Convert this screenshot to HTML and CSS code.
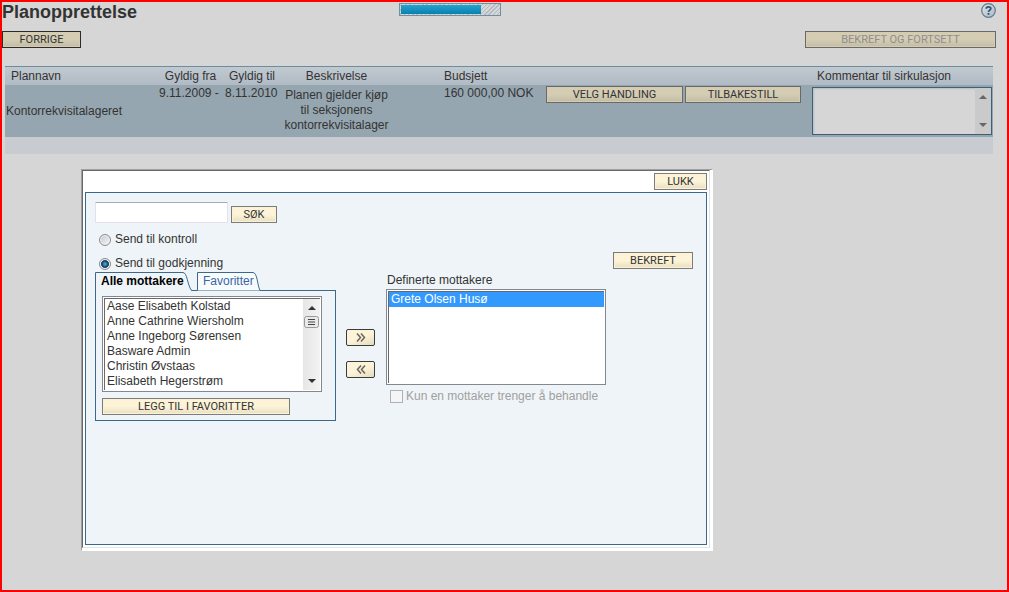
FILE: index.html
```html
<!DOCTYPE html>
<html lang="no">
<head>
<meta charset="utf-8">
<title>Planopprettelse</title>
<link rel="stylesheet" href="styles.css">
</head>
<body>
<div class="page">
  <header class="topbar">
    <h1 class="title">Planopprettelse</h1>
    <div class="progress" role="progressbar" aria-label="Fremdrift" aria-valuenow="82"><div class="progress-fill" style="width: 82%"></div></div>
    <a class="help" href="#" aria-label="Hjelp">
      <svg width="15" height="15" viewBox="0 0 15 15"><defs><linearGradient id="hg" x1="0" y1="0" x2="1" y2="1"><stop offset="0" stop-color="#dfe4e8"/><stop offset="1" stop-color="#a9b8c6"/></linearGradient></defs><circle cx="7.5" cy="7.5" r="6.8" fill="url(#hg)" stroke="#64788a" stroke-width="1.2"/><path d="M5.2 5.8C5.2 3.3 9.8 3.3 9.8 5.6C9.8 7.2 7.5 7 7.5 9" fill="none" stroke="#2a5674" stroke-width="1.7"/><rect x="6.6" y="10" width="1.8" height="1.8" fill="#2a5674"/></svg>
    </a>
  </header>
  <nav class="actions">
    <button class="btn dim strong w-prev" type="button">FORRIGE</button>
    <button class="btn dim w-next" type="button" disabled>BEKREFT OG FORTSETT</button>
  </nav>
  <table class="plans">
    <colgroup><col class="c-name"><col class="c-from"><col class="c-to"><col class="c-desc"><col class="c-budget"><col class="c-act"><col class="c-comment"></colgroup>
    <thead>
      <tr><th class="first">Plannavn</th><th class="center">Gyldig fra</th><th class="center">Gyldig til</th><th class="center">Beskrivelse</th><th class="budget">Budsjett</th><th></th><th class="comment-head">Kommentar til sirkulasjon</th></tr>
    </thead>
    <tbody>
      <tr>
        <td class="name">Kontorrekvisitalageret</td>
        <td>9.11.2009 -</td>
        <td class="to">8.11.2010</td>
        <td class="desc">Planen gjelder kjøp til seksjonens kontorrekvisitalager</td>
        <td class="budget">160 000,00 NOK</td>
        <td><div class="row-actions"><button class="btn dim w-pick" type="button">VELG HANDLING</button><button class="btn dim w-reset" type="button">TILBAKESTILL</button></div></td>
        <td>
          <div class="comment">
            <textarea class="comment-text" aria-label="Kommentar til sirkulasjon"></textarea>
            <div class="scroll dim-scroll" aria-hidden="true">
              <svg width="8" height="5" viewBox="0 0 8 5"><path d="M0 5L4 1L8 5Z" fill="#666"/></svg>
              <svg width="8" height="5" viewBox="0 0 8 5"><path d="M0 0L4 4L8 0Z" fill="#666"/></svg>
            </div>
          </div>
        </td>
      </tr>
    </tbody>
    <tfoot><tr><td colspan="7"></td></tr></tfoot>
  </table>

  <div class="dialog" role="dialog" aria-label="Velg mottakere">
    <div class="dialog-inner">
      <div class="dialog-bar"><button class="btn w-close" type="button">LUKK</button></div>
      <div class="panel">
        <div class="col-left">
          <div class="search">
            <input class="search-text" type="text" aria-label="Søk">
            <button class="btn w-search" type="button">SØK</button>
          </div>
          <label class="radio"><input type="radio" name="send"><span>Send til kontroll</span></label>
          <label class="radio"><input type="radio" name="send" checked><span>Send til godkjenning</span></label>
          <div class="tabs">
            <button class="tab active" type="button">
              <svg class="tab-shape" width="98" height="19" viewBox="0 0 98 19"><path d="M.5 19V.5H88C92.500 1 92 12 96.500 18.500V19Z" fill="#eef4f7"/><path d="M.5 19V.5H88C92.500 1 92 12 96.500 18.500H98" fill="none" stroke="#3b698b"/></svg>
              <span class="tab-label">Alle mottakere</span>
            </button>
            <button class="tab other" type="button">
              <svg class="tab-shape" width="64" height="19" viewBox="0 0 64 19"><path d="M.5 18.500V.5H56C60.500 1 60 12 63 18.500" fill="#f8fbfc" stroke="#3b698b"/></svg>
              <span class="tab-label">Favoritter</span>
            </button>
          </div>
          <div class="tab-body">
            <div class="list">
              <select class="options" size="6" aria-label="Alle mottakere">
                <option>Aase Elisabeth Kolstad</option>
                <option>Anne Cathrine Wiersholm</option>
                <option>Anne Ingeborg Sørensen</option>
                <option>Basware Admin</option>
                <option>Christin Øvstaas</option>
                <option>Elisabeth Hegerstrøm</option>
              </select>
              <div class="scroll" aria-hidden="true">
                <svg width="8" height="5" viewBox="0 0 8 5"><path d="M0 5L4 1L8 5Z" fill="#333"/></svg>
                <svg class="thumb" width="15" height="12" viewBox="0 0 15 12"><rect x=".5" y=".5" width="14" height="11" rx="2" fill="#e9e9e9" stroke="#999"/><path d="M4 3.500H11M4 6H11M4 8.500H11" stroke="#444"/></svg>
                <svg width="8" height="5" viewBox="0 0 8 5"><path d="M0 0L4 4L8 0Z" fill="#333"/></svg>
              </div>
            </div>
            <button class="btn w-fav" type="button">LEGG TIL I FAVORITTER</button>
          </div>
        </div>
        <div class="col-move">
          <button class="move" type="button" aria-label="Legg til"><svg width="10" height="9" viewBox="0 0 10 9"><path d="M1 .5L4.500 4.500L1 8.500M5 .5L8.500 4.500L5 8.500" fill="none" stroke="#666" stroke-width="1.500"/></svg></button>
          <button class="move" type="button" aria-label="Fjern"><svg width="10" height="9" viewBox="0 0 10 9"><path d="M5 .5L1.500 4.500L5 8.500M9 .5L5.500 4.500L9 8.500" fill="none" stroke="#666" stroke-width="1.500"/></svg></button>
        </div>
        <div class="col-right">
          <label class="list-label" for="chosen">Definerte mottakere</label>
          <div class="list">
            <select class="options" id="chosen" size="6"><option class="picked">Grete Olsen Husø</option></select>
          </div>
          <label class="check"><input type="checkbox" disabled><span>Kun en mottaker trenger å behandle</span></label>
        </div>
        <div class="col-confirm"><button class="btn w-confirm" type="button">BEKREFT</button></div>
      </div>
    </div>
  </div>
</div>
</body>
</html>
```
FILE: styles.css
```css
* { box-sizing: border-box; }
body {
  margin: 0;
  font: 12px/15px "Liberation Sans", Arial, sans-serif;
  color: #333;
}
button, input, select, textarea { font: inherit; color: inherit; margin: 0; }
svg { display: block; }

.page {
  position: relative;
  min-height: 100vh;
  border: 2px solid #f00;
  background: #d6d6d6;
}
.topbar {
  display: grid;
  grid-template-columns: 397px 1fr auto;
  align-items: start;
  padding: 1px 11px 0 0;
  height: 29px;
}
.title { margin: 0; font-size: 18px; line-height: 18px; }
.progress {
  width: 102px;
  height: 13px;
  border: 1px solid #718fa1;
  padding: 1px;
  background: repeating-linear-gradient(135deg, #d6d6d6 0 1px, #b0bac3 1px 2px, #d6d6d6 2px 3px);
}
.progress-fill { height: 9px; background: linear-gradient(#22a3d1, #0c80ae); }

.actions { display: flex; justify-content: space-between; padding-right: 11px; }
.btn {
  height: 17px;
  padding: 0;
  border: 1px solid #7c7c7c;
  border-radius: 0;
  font-family: Roboto, "Liberation Sans", sans-serif;
  font-size: 11px;
  line-height: 15px;
  white-space: nowrap;
  background: linear-gradient(#fdf3d6 0 50%, #e8dfc4);
  box-shadow: inset 0 0 0 1px #fcf1d2;
}
.btn.dim {
  border-color: #696969;
  background: linear-gradient(#d4ccb3 0 50%, #c3bca5);
  box-shadow: inset 0 0 0 1px #d4cbb0;
}
.btn.strong { border-color: #2b2b2b; }
.btn:disabled { color: #8e8e8e; }
.w-prev { width: 79px; }
.w-next { width: 191px; }
.w-pick { width: 137px; }
.w-reset { width: 116px; }
.w-close { width: 53px; }
.w-search { width: 46px; }
.w-fav { width: 188px; }
.w-confirm { width: 80px; }

.plans {
  width: calc(100% - 17px);
  margin: 18px 14px 0 3px;
  border-collapse: collapse;
  table-layout: fixed;
  border-top: 1px solid #6c8d9e;
}
.c-name { width: 154px; }
.c-from { width: 63px; }
.c-to { width: 60px; }
.c-desc { width: 109px; }
.c-budget { width: 155px; }
.c-comment { width: 181px; }
.plans th, .plans td { padding: 0; font-weight: normal; text-align: left; vertical-align: top; }
.plans thead { background: linear-gradient(#c1c9d0, #b0bac4); }
.plans th { height: 18px; line-height: 18px; white-space: nowrap; }
.plans tbody { background: #96a6b0; }
.plans tbody td { height: 52px; padding-top: 1px; }
.plans tfoot td { height: 17px; background: #c8ccd0; }
.plans .center { text-align: center; }
.plans .first { padding-left: 6px; }
.plans .budget { padding-left: 53px; white-space: nowrap; }
.plans .comment-head { padding-left: 5px; }
.plans .name { vertical-align: middle; padding-left: 1px; }
.plans .to { padding-left: 3px; white-space: nowrap; }
.plans tbody .desc { padding-top: 3px; text-align: center; }
.row-actions { display: flex; gap: 2px; }
.comment {
  display: flex;
  width: 180px;
  height: 48px;
  margin-top: 1px;
  border: 1px solid #3b607c;
  background: #d6d6d6;
}
.comment-text {
  flex: 1;
  min-width: 0;
  border: 0;
  resize: none;
  background: none;
  box-shadow: inset 1px 1px 2px #bbb;
}

.scroll {
  display: flex;
  flex-direction: column;
  align-items: center;
  justify-content: space-between;
  width: 16px;
  padding: 6px 0;
  background: linear-gradient(90deg, #e6e6e6, #f3f3f3);
}
.dim-scroll { background: #cacaca; }
.thumb { margin: 6px 0 auto; }

.dialog {
  position: absolute;
  left: 79px;
  top: 167px;
  width: 632px;
  padding: 0 2px 2px 0;
  border: 1px solid #fff;
  border-top-color: #a0a0a0;
  border-left-color: #a0a0a0;
  background: #fff;
}
.dialog-inner {
  border: 1px solid #e3e3e3;
  border-top-color: #696969;
  border-left-color: #696969;
  padding: 2px;
}
.dialog-bar { display: flex; justify-content: flex-end; margin-bottom: 2px; }
.panel {
  display: grid;
  grid-template-columns: 241px 50px 220px auto;
  justify-content: start;
  min-height: 353px;
  padding: 9px;
  border: 1px solid #3b698b;
  background: #eef4f7;
}
.search { display: flex; align-items: flex-end; gap: 3px; height: 21px; }
.search-text {
  width: 133px;
  height: 21px;
  padding: 0 4px;
  border: 1px solid #e2e3ea;
  border-top-color: #abadb3;
  border-radius: 1px;
  background: #fff;
}
.radio { display: flex; align-items: center; gap: 4px; margin-top: 9px; padding-left: 4px; height: 15px; }
.radio input {
  appearance: none;
  width: 12px;
  height: 12px;
  border: 1px solid #8a8c8e;
  border-radius: 50%;
  background: linear-gradient(135deg, #c4c8ce, #f6f6f6);
  box-shadow: inset 0 0 0 1px #f2f2f2;
}
.radio input:checked { background: radial-gradient(circle at 50% 50%, #4fb5e0 0, #15496d 3px, #123c5c 4px, #e4eaee 4px); }

.tabs { display: flex; gap: 5px; margin-top: 1px; height: 19px; position: relative; }
.tab { position: relative; height: 19px; padding: 0; border: 0; background: none; text-align: left; white-space: nowrap; }
.tab-shape { position: absolute; left: 0; top: 0; }
.tab-label { position: relative; padding-left: 6px; line-height: 19px; }
.tab.active { width: 97px; font-weight: bold; color: #000; }
.tab.other { width: 64px; color: #3a66a7; }
.tab-body {
  margin-top: -1px;
  padding: 5px 6px;
  border: 1px solid #3b698b;
}
.tab-body .list { margin-bottom: 6px; }
.tab-body .btn { display: block; }
.list {
  display: flex;
  width: 220px;
  height: 96px;
  padding: 1px;
  border: 1px solid #828790;
  background: #fff;
}
.options {
  flex: 1;
  min-width: 0;
  padding: 0;
  border: 0;
  border-top: 1px solid #696969;
  border-left: 1px solid #696969;
  border-radius: 0;
  background: #fff;
  overflow: hidden;
  outline: 0;
  scrollbar-width: none;
}
.options option { padding: 0 2px; height: 15px; min-height: 15px; line-height: 15px; }
.options .picked { background: #39f; color: #fff; }
.list .scroll { border-top: 1px solid #696969; width: 17px; }

.col-move { display: flex; flex-direction: column; gap: 15px; padding-top: 127px; margin-left: 10px; width: 29px; }
.move {
  display: flex;
  align-items: center;
  justify-content: center;
  height: 17px;
  padding: 0;
  border: 1px solid #3a3a42;
  border-radius: 2px;
  background: linear-gradient(160deg, #fdf3d6 50%, #e4dbbd);
}
.col-right { padding-top: 71px; }
.list-label { display: block; height: 16px; padding-left: 1px; }
.check { display: flex; align-items: center; gap: 3px; margin-top: 4px; padding-left: 4px; color: #a0a0a0; white-space: nowrap; }
.check input { appearance: none; width: 13px; height: 13px; border: 1px solid #b1b1b1; background: #f4f5f6; }
.col-confirm { padding: 50px 0 0 7px; }
```
